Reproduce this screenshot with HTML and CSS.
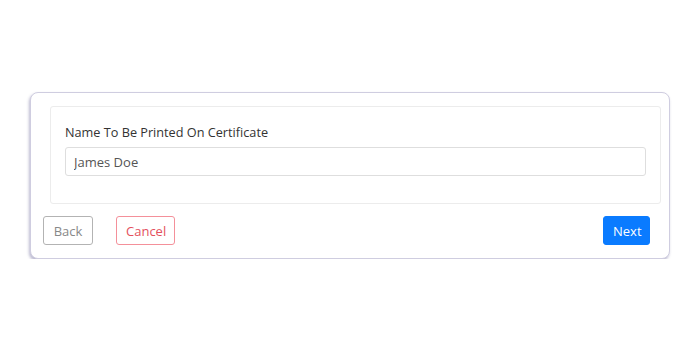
FILE: index.html
```html
<!DOCTYPE html>
<html lang="en">
<head>
    <meta charset="UTF-8">
    <title>Certificate Name</title>
    <link rel="stylesheet" href="styles.css">
</head>
<body>
    <div class="wizard-card">
        <div class="step-panel">
            <label class="field-label" for="cert-name">Name To Be Printed On Certificate</label>
            <input class="field-input" id="cert-name" type="text" value="James Doe">
        </div>
        <div class="wizard-actions">
            <button class="btn btn-back">Back</button>
            <button class="btn btn-cancel">Cancel</button>
            <button class="btn btn-next">Next</button>
        </div>
    </div>
</body>
</html>
```

FILE: styles.css
```css
body {
    font-family: 'Open Sans', sans-serif;
    margin: 0;
    padding-top: 92px;
    background-color: #fff;
}
.wizard-card {
    margin-left: 30px;
    width: 638px;
    height: 165px;
    border: 1px solid #cfcde0;
    border-radius: 8px;
    box-shadow: -1px 2px 3px rgba(60, 55, 120, 0.35);
    background-color: #fff;
}
.step-panel {
    margin: 13px 8px 0 19px;
    height: 68px;
    padding: 15px 14px 13px 14px;
    border: 1px solid #ececec;
    border-radius: 3px;
}
.field-label {
    display: block;
    font-size: 12.7px;
    color: #333;
    line-height: 18px;
    margin-top: 1px;
}
.field-input {
    display: block;
    box-sizing: border-box;
    width: 100%;
    height: 29px;
    margin-top: 6px;
    padding: 0 8px;
    border: 1px solid #dedede;
    border-radius: 3px;
    font-family: 'Open Sans', sans-serif;
    font-size: 13px;
    color: #555;
    outline: none;
}
.wizard-actions {
    display: flex;
    margin: 12px 19px 0 12px;
}
.btn {
    height: 29px;
    padding: 0 9px;
    border-radius: 3px;
    font-family: 'Open Sans', sans-serif;
    font-size: 13px;
    background-color: #fff;
    cursor: pointer;
}
.btn-back {
    border: 1px solid #b3b3b3;
    color: #888;
    width: 50px;
}
.btn-cancel {
    border: 1px solid #f4909a;
    color: #e4505e;
    margin-left: 23px;
    width: 59px;
}
.btn-next {
    margin-left: auto;
    border: 1px solid #0a7bff;
    background-color: #0a7bff;
    color: #fff;
    width: 47px;
}
```
